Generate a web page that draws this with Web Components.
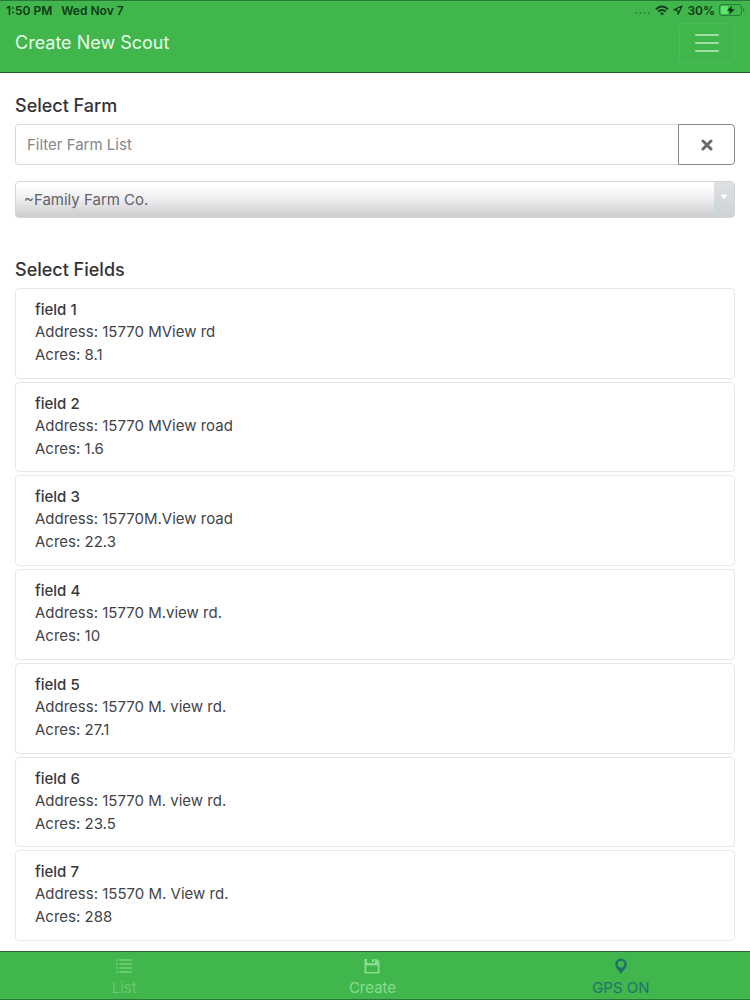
<!DOCTYPE html>
<html lang="en">
<head>
<meta charset="utf-8">
<meta name="viewport" content="width=device-width, initial-scale=1">
<title>Create New Scout</title>
<style>
html, body { margin: 0; }
body { font-family: Inter, "Liberation Sans", sans-serif; font-size: 15px; color: #434348; background: #fff; --green: #40b64d; --edge: #27783a; }
</style>
</head>
<body>
<scout-app></scout-app>
<script>
const define = (name, html, setup) => {
  const template = document.createElement('template');
  template.innerHTML = '<style>*{box-sizing:border-box}button,input,select{font:inherit;color:inherit;margin:0}</style>' + html;
  customElements.define(name, class extends HTMLElement {
    constructor() {
      super();
      this.attachShadow({ mode: 'open' }).append(template.content.cloneNode(true));
    }
    connectedCallback() { if (setup) setup(this, this.shadowRoot); }
  });
};

define('status-bar', `
<style>
:host { display: flex; justify-content: space-between; align-items: center; height: 18px; padding: 0 5px 0 6px; font-size: 12px; font-weight: 600; color: #0d3b17; }
div { display: flex; align-items: center; }
.left { gap: 9px; }
.right { gap: 4px; }
svg { display: block; }
</style>
<div class="left"><span>1:50 PM</span><span>Wed Nov 7</span></div>
<div class="right">
  <svg width="17" height="12" viewBox="0 0 17 12" fill="#2a8a3a"><circle cx="2" cy="9" r="1"/><circle cx="6.300" cy="9" r="1"/><circle cx="10.600" cy="9" r="1"/><circle cx="15" cy="9" r="1"/></svg>
  <svg width="14" height="11" viewBox="0 0 14 11" fill="none" stroke="#0d3b17" stroke-width="2"><path d="M1 4.200Q7-1.200 13 4.200M3.300 6.600Q7 3.300 10.700 6.600"/><path d="M7 10.500 4.900 8.300Q7 6.700 9.100 8.300Z" fill="#0d3b17" stroke="none"/></svg>
  <svg width="10" height="10" viewBox="0 0 10 10" fill="none" stroke="#0d3b17" stroke-width="1.200" stroke-linejoin="round"><path d="M9 1 1 4.800l3.700.5.400 3.900Z"/></svg>
  <span>30%</span>
  <svg width="26" height="12" viewBox="0 0 26 12"><rect x=".5" y=".5" width="22" height="11" rx="2.500" fill="none" stroke="#26803a"/><rect x="2" y="2" width="7" height="8" rx="1" fill="#5fe572"/><path d="M24 4v4q1.500-.6 1.500-2T24 4Z" fill="#26803a"/><path d="M13.200 1.500 7.800 6.800h3.300l-.9 3.700 5.600-5.300h-3.400Z" fill="#082d10"/></svg>
</div>`);

define('app-header', `
<style>
:host { display: block; background: var(--green); border-top: 1px solid var(--edge); border-bottom: 1px solid #24562f; }
header { display: flex; justify-content: space-between; align-items: center; padding: 4px 15px 9px; }
h1 { margin: 0; font-size: 18px; line-height: 24px; font-weight: 400; color: #eafbe9; }
button { display: flex; align-items: center; justify-content: center; width: 56px; height: 40px; padding: 0; background: none; border: 1px solid #4bbd58; border-radius: 4px; }
</style>
<status-bar></status-bar>
<header><h1><slot></slot></h1>
<button type="button" aria-label="Menu"><svg width="24" height="18" viewBox="0 0 24 18" stroke="#9fe0a2" stroke-width="2" stroke-linecap="round"><path d="M1 1h22M1 9h22M1 17h22"/></svg></button></header>`);

define('farm-filter', `
<style>
:host { display: block; }
form { display: flex; }
input { flex: 1; min-width: 0; height: 41px; padding: 0 11px; border: 1px solid #d9dcdf; border-right: 0; border-radius: 4px 0 0 4px; background: #fff; outline: 0; }
input::placeholder { color: #83878b; opacity: 1; }
button { display: flex; align-items: center; justify-content: center; width: 57px; height: 41px; padding: 0; background: #fff; border: 1px solid #85898c; border-radius: 0 4px 4px 0; }
</style>
<form><input type="text" aria-label="Filter Farm List" placeholder="Filter Farm List"><button type="button" aria-label="Clear filter"><svg width="12" height="12" viewBox="0 0 12 12" stroke="#66696d" stroke-width="3" stroke-linecap="round"><path d="m2 2 8 8m0-8-8 8"/></svg></button></form>`,
(host, root) => {
  root.querySelector('button').onclick = () => { root.querySelector('input').value = ''; };
});

define('farm-select', `
<style>
:host { display: block; position: relative; }
select { display: block; width: 100%; height: 37px; padding: 0 30px 0 8px; appearance: none; border: 1px solid #d3d5d8; border-radius: 4px; background: linear-gradient(#fff 10%, #f0eff1 45%, #cccbcd); color: #626267; outline: 0; }
span { position: absolute; top: 1px; bottom: 1px; right: 1px; width: 20px; display: flex; justify-content: center; padding-top: 12px; background: linear-gradient(#dde1e4, #ccd2d5); border-radius: 0 3px 3px 0; pointer-events: none; }
</style>
<select aria-label="Farm"><option>~Family Farm Co.</option></select>
<span><svg width="8" height="6" viewBox="0 0 8 6"><path d="M.5.500h7L4 5.500Z" fill="#fff"/></svg></span>`);

define('field-card', `
<style>
:host { display: grid; }
button { display: flex; flex-direction: column; width: 100%; padding: 10px 19px 8px; text-align: left; background: #fff; border: 1px solid #e9e7e9; border-radius: 4px; }
strong { line-height: 22px; font-weight: 500; color: #38383d; }
.address { line-height: 22px; }
.acres { line-height: 24px; }
</style>
<button type="button"><strong><slot></slot></strong><span class="address">Address: <slot name="address"></slot></span><span class="acres">Acres: <slot name="acres"></slot></span></button>`);

define('tab-item', `
<style>
:host { display: block; }
a { display: flex; flex-direction: column; align-items: center; gap: 3px; padding-top: 5px; color: inherit; text-decoration: none; line-height: 20px; }
</style>
<a href="#"><slot name="icon"></slot><slot></slot></a>`);

define('tab-bar', `
<style>
:host { display: grid; grid-template-columns: repeat(3, 1fr); height: 49px; padding-right: 5px; background: var(--green); border-top: 1px solid #2c6639; border-bottom: 1px solid var(--edge); }
.list { color: #68c971; }
.create { color: #8bdb90; }
.gps { color: #20736c; }
svg { display: block; }
</style>
<tab-item class="list"><svg slot="icon" width="18" height="18" viewBox="0 0 18 18" stroke="currentColor" stroke-width="1.800"><path d="M1 3h2M4.500 3H17M1 7h2M4.500 7H17M1 11h2M4.500 11H17M1 15h2M4.500 15H17"/></svg>List</tab-item>
<tab-item class="create"><svg slot="icon" width="18" height="18" viewBox="0 0 18 18" fill="currentColor" fill-rule="evenodd"><path d="M1.500 2H4v4h8V2h1.500L16.500 4.500V16.500h-15ZM3.200 8.500V15h11.600V8.500ZM9 2h2v3H9Z"/></svg>Create</tab-item>
<tab-item class="gps"><svg slot="icon" width="18" height="18" viewBox="0 0 18 18" fill="currentColor" fill-rule="evenodd"><path d="M9 1.500a5.800 5.800 0 0 1 5.800 5.800C14.800 11 11 14 9 17 7 14 3.200 11 3.200 7.300A5.800 5.800 0 0 1 9 1.500ZM9 4a3.200 3.200 0 1 0 0 6.400A3.200 3.200 0 0 0 9 4Z"/></svg>GPS ON</tab-item>`);

define('scout-app', `
<style>
:host { display: flex; flex-direction: column; min-height: 100vh; }
main { flex: 1; display: flex; flex-direction: column; padding: 21px 15px 10px; }
h2 { margin: 0 0 6px; font-size: 18px; line-height: 24px; font-weight: 500; color: #333337; }
farm-select { margin: 16px 0 40px; }
.fields { flex: 1; display: grid; grid-auto-rows: 1fr; gap: 3px; }
</style>
<app-header>Create New Scout</app-header>
<main>
<h2>Select Farm</h2>
<farm-filter></farm-filter>
<farm-select></farm-select>
<h2>Select Fields</h2>
<div class="fields"></div>
</main>
<tab-bar></tab-bar>`,
(host, root) => {
  const fields = [
    ['field 1', '15770 MView rd', '8.1'],
    ['field 2', '15770 MView road', '1.6'],
    ['field 3', '15770M.View road', '22.3'],
    ['field 4', '15770 M.view rd.', '10'],
    ['field 5', '15770 M. view rd.', '27.1'],
    ['field 6', '15770 M. view rd.', '23.5'],
    ['field 7', '15570 M. View rd.', '288']
  ];
  root.querySelector('.fields').innerHTML = fields.map(([name, address, acres]) =>
    `<field-card>${name}<span slot="address">${address}</span><span slot="acres">${acres}</span></field-card>`).join('');
});
</script>
</body>
</html>
